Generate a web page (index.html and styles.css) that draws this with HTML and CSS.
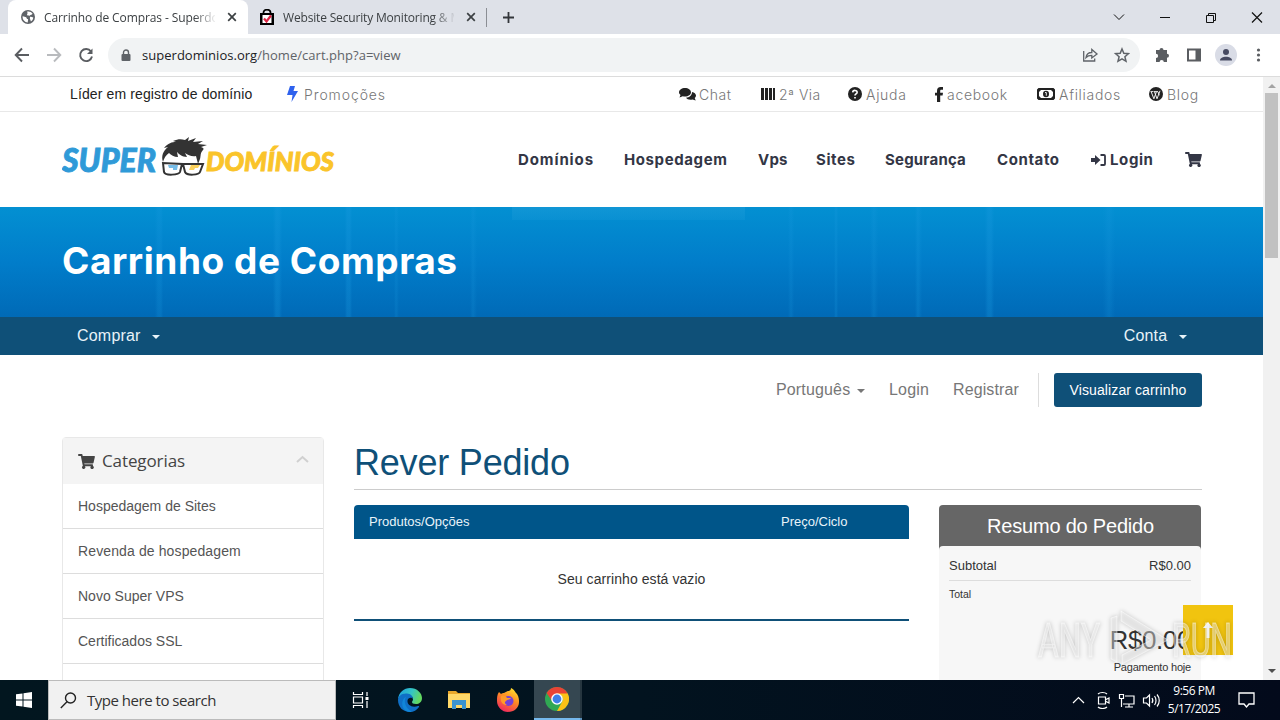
FILE: index.html
```
<!DOCTYPE html>
<html lang="pt">
<head>
    <meta charset="UTF-8">
    <meta name="viewport" content="width=device-width, initial-scale=1.0">
    <title>Carrinho de Compras - Superdominios</title>
    <link rel="stylesheet" href="styles.css">
</head>
<body>
    <svg width="0" height="0" class="defs">
        <symbol id="cart" viewBox="0 0 576 512"><path d="M528 301l47-208c4-15-8-29-23-29H159l-9-45C148 8 138 0 126 0H24C11 0 0 11 0 24v16c0 13 11 24 24 24h70l70 343a56 56 0 1 0 67 9h210a56 56 0 1 0 64-10l5-25c4-15-8-29-23-29H218l-6-32h293c11 0 21-8 23-19z"/></symbol>
        <symbol id="close" viewBox="0 0 10 10"><path d="M1.2 1.2l7.6 7.6M8.8 1.2L1.2 8.8" fill="none" stroke="currentColor" stroke-width="1.7"/></symbol>
    </svg>

    <!-- Tabs -->
    <div class="tabs">
        <div class="tab active">
            <svg width="14" height="14" viewBox="0 0 14 14"><circle cx="7" cy="7" r="7" fill="#5f6368"/><path d="M1.6 6.2c1.8.2 2.3 1 3.6 1 .8 1 .2 1.7 1.7 1.9.6 1-.2 1.6-.1 3.3C3.6 12.2 1.4 9.8 1.6 6.2zM6 1.7c2-.6 4.3.1 5.6 2-.9 1.5-2 .7-2.7 1.8-.9.9-1.4-.5-2.5-.1C5.2 4.7 7.5 3.7 6 1.7zM9 7c1.3-.6 2.2.5 3.3.4-.2 1.9-1.1 3.2-2.4 4C9.5 9.8 8.5 8.700 9 7z" fill="#fff"/></svg>
            <span class="tab-title">Carrinho de Compras - Superdomínios</span>
            <svg class="x" width="10" height="10"><use href="#close"/></svg>
        </div>
        <div class="tab second">
            <svg width="14" height="17" viewBox="0 0 14 17"><path d="M3.5 5V3.5a3.5 2.8 0 0 1 7 0V5" fill="none" stroke="#000" stroke-width="1.7"/><path d="M0 4h14v12H0z"/><path d="M2.500 6h9v8h-9z" fill="#fff"/><path d="M4 9.500l2.500 3L11 6.500" fill="none" stroke="#dc2545" stroke-width="2.200"/></svg>
            <span class="tab-title">Website Security Monitoring &amp; Malware</span>
            <svg class="x" width="10" height="10"><use href="#close"/></svg>
        </div>
        <svg class="plus" width="13" height="13" viewBox="0 0 13 13"><path d="M6.5 1v11M1 6.5h11" stroke="#33363a" stroke-width="1.8"/></svg>
        <svg class="window-buttons" width="150" height="14" viewBox="0 0 150 14" fill="none" stroke="#111">
            <path d="M1 4.5l5 5 5-5"/><path d="M47 7.5h10"/><path d="M93.5 5.5h7v7h-7zM95.5 5.500v-2h7v7h-2"/><path d="M139 2.5l10 10M149 2.5l-10 10" stroke-width="1.200"/>
        </svg>
    </div>

    <!-- Address bar -->
    <div class="toolbar">
        <svg class="nav-icons" width="80" height="16" viewBox="0 0 80 16" fill="none" stroke="#5a5d61" stroke-width="1.9">
            <path d="M15 8H2M8 1.5L1.7 8 8 14.5"/><path d="M33 8h13M40 1.5L46.3 8 40 14.5" stroke="#b9bbbe"/><path d="M77 4.5A6 6 0 1 0 78 9.5"/><path d="M78.5 1.5v5.5H73z" fill="#5a5d61" stroke="none"/>
        </svg>
        <div class="url">
            <svg width="10" height="13" viewBox="0 0 10 13"><path d="M2.5 6V3.5a2.5 2.5 0 0 1 5 0V6" fill="none" stroke="#5f6368" stroke-width="1.4"/><rect x=".5" y="5" width="9" height="7" rx="1" fill="#5f6368"/></svg>
            <span class="address"><b>superdominios.org</b>/home/cart.php?a=view</span>
            <svg class="share" width="48" height="16" viewBox="0 0 48 16" fill="none" stroke="#5f6368" stroke-width="1.3">
                <path d="M1.7 4v10h11v-2.5M4 10.5c.5-3.5 2.5-5 5.8-5V2.5L15 7l-5.2 4V8.3C7 8.3 5.5 8.8 4 10.5z"/><path d="M40 2l1.8 4.3 4.6.4-3.5 3 1.1 4.6L40 11.9l-4 2.4 1.1-4.6-3.5-3 4.6-.4z" stroke-width="1.5"/>
            </svg>
        </div>
        <svg class="ext" width="112" height="22" viewBox="0 0 112 22" fill="#5a5d61">
            <path d="M2 6h3.5a2 2 0 1 1 4 0H13v3.8a2 2 0 1 1 0 4V18H9.8a2 2 0 1 0-4.2 0H2v-4a2 2 0 1 0 0-4.200z"/>
            <path d="M33 4.5h14v13H33zM35 6.5v9h6.500v-9z" fill-rule="evenodd"/>
            <circle cx="72" cy="11" r="11" fill="#d9dce6"/><circle cx="72" cy="8" r="3" fill="#474b62"/><path d="M66 16.5c0-5 12-5 12 0z" fill="#474b62"/>
            <circle cx="104.500" cy="6" r="1.6"/><circle cx="104.500" cy="11" r="1.6"/><circle cx="104.500" cy="16" r="1.6"/>
        </svg>
    </div>

    <div class="viewport">
        <div class="page">
            <div class="topbar">
                <span class="slogan">Líder em registro de domínio</span>
                <svg class="bolt" width="11" height="16" viewBox="0 0 11 16"><path d="M3 0h5L6.5 5H11L4.5 16 5.5 9H0z" fill="#2f62ee"/></svg>
                <a class="promo">Promoções</a>
                <div class="top-links">
                    <a><svg width="17" height="14" viewBox="0 0 17 14"><path d="M6 1c3.3 0 6 1.9 6 4.3S9.3 9.6 6 9.6c-.8 0-1.5-.1-2.2-.3L.5 10.5l1-2.6C.5 7.2 0 6.3 0 5.3 0 2.9 2.7 1 6 1z"/><path d="M13 5c2.3.5 4 1.9 4 3.6 0 1-.5 1.8-1.3 2.5l1 2.3-3.2-1c-3 .7-5.5-.2-6.5-1.7C10.5 10.5 13 8.5 13 5z"/></svg><span>Chat</span></a>
                    <a><svg width="15" height="12" viewBox="0 0 15 12"><path d="M0 0h3v12H0zM4 0h3v12H4zM8 0h3v12H8zM12 0h2v12h-2z"/></svg><span>2ª Via</span></a>
                    <a><svg width="14" height="14" viewBox="0 0 14 14"><circle cx="7" cy="7" r="7"/><path d="M4.7 5.4C5 2.5 9.6 3 9.1 5.6 8.8 7 7 6.9 7 8.5M7 10v1.5" fill="none" stroke="#fff" stroke-width="1.6"/></svg><span>Ajuda</span></a>
                    <a><svg width="8" height="15" viewBox="0 0 8 15"><path d="M2 15V8.5H0V5.7h2V4c0-2.5 1.2-4 3.8-4H8v2.7H6.5c-1 0-1.3.4-1.3 1.3v1.7H8l-.4 2.8H5.2V15z"/></svg><span>acebook</span></a>
                    <a><svg width="18" height="12" viewBox="0 0 18 12"><path d="M1.500 0h15L18 1.500v9L16.500 12h-15L0 10.500v-9zM4 2L2 4v4l2 2h10l2-2V4l-2-2z" fill-rule="evenodd"/><ellipse cx="9" cy="6" rx="3" ry="3.300"/><path d="M8 4.500h1.300v3.200" fill="none" stroke="#fff" stroke-width=".9"/></svg><span>Afiliados</span></a>
                    <a><svg width="14" height="14" viewBox="0 0 14 14"><circle cx="7" cy="7" r="7"/><path d="M2.2 4.8l2.7 7M5.5 4.8l2.5 7M9 4.8l1.3 3.5M4.9 11.800L7.300 5M8 11.800l3-8M1.500 4.600h3M5 4.600h4" fill="none" stroke="#fff" stroke-width=".9"/></svg><span>Blog</span></a>
                </div>
            </div>

            <div class="header">
                <svg class="logo" width="276" height="44" viewBox="0 0 276 44">
                    <text class="logo-text" x="0" y="36" textLength="94" lengthAdjust="spacingAndGlyphs" font-size="32" fill="#2f9ad8" stroke="#2f9ad8">SUPER</text>
                    <text class="logo-text" x="144" y="35" textLength="128" lengthAdjust="spacingAndGlyphs" font-size="27" fill="#fac42a" stroke="#fac42a">DOMÍNIOS</text>
                    <path d="M101 26c-2-6 0-11 5-15l-4 1c4-5 8-6 12-6l-3-1c5-2 8-2 12-1l4-3-1 4 8-3-3 4 10-1-5 3 9 1-6 2c3 1 3 2 2 3-3 3-2 6-3 9l-2 5-2-8c-4 1-8-1-11-3l2 4c-5 0-8-3-10-5l1 5c-4 0-7-2-9-4-3 2-5 5-6 9z" fill="#333"/>
                    <path d="M101 27l1 9c1 4 15 3 16 0l2-8zm20 1l2 8c2 4 14 3 15 0l3-8z" fill="#fff" stroke="#333" stroke-width="2"/>
                    <path d="M106 29h10l-1 5h-4v-2h-4z" fill="#77bde8"/><path d="M129 29h9l-2 3h-3l-1 2h-5z" fill="#fbd15b"/>
                </svg>
                <div class="menu">
                    <a>Domínios</a><a>Hospedagem</a><a>Vps</a><a>Sites</a><a>Segurança</a><a>Contato</a>
                    <a class="enter"><svg width="15" height="12" viewBox="0 0 15 12"><path d="M0 4h4V1l5.500 5L4 11V8H0z"/><path d="M9.500 1H13a1 1 0 0 1 1 1v8a1 1 0 0 1-1 1H9.500" fill="none" stroke="#333645" stroke-width="1.800"/></svg>Login</a>
                    <a><svg width="17" height="15"><use href="#cart"/></svg></a>
                </div>
            </div>

            <div class="banner"><h1>Carrinho de Compras</h1></div>

            <div class="subnav">
                <span>Comprar <i class="caret"></i></span>
                <span>Conta <i class="caret"></i></span>
            </div>

            <div class="user-row">
                <span class="lang">Português <i class="caret"></i></span>
                <span class="login">Login</span>
                <span class="register">Registrar</span>
                <a class="button">Visualizar carrinho</a>
            </div>

            <div class="content">
                <div class="sidebar">
                    <div class="side-title">
                        <svg width="17" height="15"><use href="#cart"/></svg>
                        <span>Categorias</span>
                        <svg class="chevron" width="13" height="8" viewBox="0 0 13 8"><path d="M1 7l5.500-5L12 7" fill="none" stroke="#d0d0d0" stroke-width="2"/></svg>
                    </div>
                    <a>Hospedagem de Sites</a>
                    <a>Revenda de hospedagem</a>
                    <a>Novo Super VPS</a>
                    <a>Certificados SSL</a>
                    <a></a>
                </div>
                <div class="main">
                    <h2>Rever Pedido</h2>
                    <div class="columns">
                        <div class="cart">
                            <div class="cart-head"><span>Produtos/Opções</span><span>Preço/Ciclo</span></div>
                            <div class="cart-empty">Seu carrinho está vazio</div>
                        </div>
                        <div class="summary">
                            <h3>Resumo do Pedido</h3>
                            <div class="summary-body">
                                <div class="subtotal"><span>Subtotal</span><span>R$0.00</span></div>
                                <div class="total">Total</div>
                                <div class="amount">R$0.00</div>
                                <div class="today">Pagamento hoje</div>
                            </div>
                        </div>
                    </div>
                </div>
            </div>
        </div>
        <div class="scrollbar">
            <i class="up"></i>
            <div class="thumb"></div>
            <i class="down"></i>
        </div>
    </div>

    <!-- Back to top button -->
    <div class="to-top"><svg width="10" height="16" viewBox="0 0 10 16"><path d="M5 0l5 6H6.500v10h-3V6H0z" fill="#fff"/></svg></div>

    <svg class="watermark" width="204" height="64" viewBox="0 0 204 64">
        <text x="4" y="51" textLength="62" lengthAdjust="spacingAndGlyphs">ANY</text>
        <path class="mark" d="M77 12l6-2v46l-6-3zM87 5l47 29-46 24v-9l29-15-30-19z"/>
        <text x="138" y="51" textLength="60" lengthAdjust="spacingAndGlyphs">RUN</text>
    </svg>

    <!-- Taskbar -->
    <div class="taskbar">
        <div class="start"><svg width="16" height="16" viewBox="0 0 16 16"><path d="M0 2.300l6.500-.9v6.100H0zM7.500 1.200L16 0v7.500H7.500zM0 8.500h6.500v6.100L0 13.700zM7.500 8.500H16V16l-8.500-1.200z" fill="#fff"/></svg></div>
        <div class="search">
            <svg width="17" height="17" viewBox="0 0 17 17" fill="none" stroke="#222" stroke-width="1.400"><circle cx="10.500" cy="6" r="5"/><path d="M7 9.800L.8 16"/></svg>
            <span>Type here to search</span>
        </div>
        <div class="apps">
            <div><svg width="18" height="16" viewBox="0 0 18 16" fill="none" stroke="#fff" stroke-width="1.200"><path d="M1.500 0v2.500h9V0M1.500 16v-2.500h9V16M1.500 5h9v6h-9zM15 0v4M15 9v7"/><path d="M13.500 5h3v3h-3z" fill="#fff" stroke="none"/></svg></div>
            <div><svg width="24" height="24" viewBox="0 0 24 24">
                <defs><linearGradient id="edge" x1="0" y1="0" x2="1" y2=".3"><stop offset="0" stop-color="#1b9de2"/><stop offset=".6" stop-color="#35c5c4"/><stop offset="1" stop-color="#62d861"/></linearGradient></defs>
                <path d="M0 11C1 4 6 0 12 0c7 0 12 5 12 10 0 4-3 6-6 6s-4-1-4-2 1-1 1-3-2-4-5-4C5 7 1 9 0 11z" fill="url(#edge)"/>
                <path d="M0 12c0-4 4-7 9-6.500 3.500.3 6 2.500 6 5.500-1-2-5-2-5.500 1.500C9 17 14 20 20 18c.8-.2 1.500.2 1 1-2 3-5.500 5-9 5C5 24 0 19 0 12z" fill="#0f6fc6"/>
                <path d="M8 9c-3 5 0 12 6 14.800C7 25 3 19 4.500 13.500 5.200 11 6.500 9.500 8 9z" fill="#1186d8"/></svg></div>
            <div><svg width="22" height="18" viewBox="0 0 22 18"><path d="M0 0h8l2 2h12v15H0z" fill="#e9a82b"/><path d="M0 3h22v14H0z" fill="#ffd868"/><path d="M4 9h14v9h-4v-4H8v4H4z" fill="#3c94d0"/></svg></div>
            <div><svg width="24" height="24" viewBox="0 0 24 24">
                <defs><linearGradient id="fox" x1=".8" y1="0" x2=".3" y2="1"><stop offset="0" stop-color="#ffe52e"/><stop offset=".45" stop-color="#ff8b24"/><stop offset="1" stop-color="#f0265f"/></linearGradient></defs>
                <path d="M3 4l2 2c1-1 2-1 3-1 2-1 3-2 4-2 2 0 3-1 3-3 4 2 4 4 5 5l1 1c2 3 2 6 2 8 0 6-5 10-11 10S1 19 1 13c0-4 0-6 2-9z" fill="url(#fox)"/><circle cx="12.500" cy="13" r="5" fill="#7540d6"/><path d="M5 8c3-1 5 0 6 2h4c-1 2-4 1-5 3-2 1-1 3 1 4-5 0-7-4-6-9z" fill="#ff9b28"/></svg></div>
            <div class="running"><svg width="24" height="24" viewBox="0 0 24 24"><circle cx="12" cy="12" r="12" fill="#30a853"/><path d="M1.600 6A12 12 0 0 1 22.400 6L22.400 7H12L7 14z" fill="#e94335"/><path d="M22.400 6A12 12 0 0 1 12 24l5-9c2-4 0-7-5-8.500h10.400z" fill="#fbc116"/><circle cx="12" cy="12" r="5.800" fill="#fff"/><circle cx="12" cy="12" r="4.400" fill="#3f7fe8"/></svg></div>
            <div class="running-edge"></div>
        </div>
        <div class="tray">
            <svg width="90" height="18" viewBox="0 0 90 18" fill="none" stroke="#fff" stroke-width="1.200">
                <path d="M1 12l5.500-5.500L12 12"/>
                <path d="M26.500 6h7v7h-7zM34 8.500l3-1.500v5l-3-1.500M26 3c2-2 7-2 9 0M26 16c2 2 7 2 9 0"/>
                <path d="M53 5h9v8H51M57 13v3M53 16h8M47.500 3.500h4v4h-4zM49.500 7.500V16"/>
                <path d="M71.500 7h3l3-3v11l-3-3h-3zM80 7c1 1.500 1 3.500 0 5M82.500 5c2 2.500 2 6.500 0 9M85 3.500c3 3.500 3 8.500 0 12"/>
            </svg>
            <div class="clock"><div>9:56 PM</div><div>5/17/2025</div></div>
            <svg class="note" width="17" height="17" viewBox="0 0 17 17" fill="none" stroke="#fff" stroke-width="1.300"><path d="M1 1h15v11h-5l-2.500 3L6 12H1z"/></svg>
        </div>
    </div>
</body>
</html>
```

FILE: styles.css
```
* {
    box-sizing: border-box;
}
body {
    margin: 0;
    width: 1280px;
    height: 720px;
    overflow: hidden;
    position: relative;
    font-family: "Liberation Sans", Arial, sans-serif;
    background: #fff;
    color: #333;
}
svg {
    display: block;
    flex-shrink: 0;
}
.defs {
    position: absolute;
}
h1, h2, h3 {
    margin: 0;
}
span, a, h1, h2, h3 {
    white-space: nowrap;
}

/* browser */
.tabs {
    display: flex;
    align-items: center;
    height: 34px;
    background: #dee1e8;
    font: 12px "Open Sans", sans-serif;
    color: #3c4043;
}
.tab {
    display: flex;
    align-items: center;
    height: 34px;
}
.tab.active {
    width: 240px;
    margin-left: 8px;
    padding-left: 13px;
    background: #fff;
    border-radius: 8px 8px 0 0;
}
.tab.second {
    width: 239px;
    padding-left: 12px;
}
.tab-title {
    width: 171px;
    margin: 0 12px 0 9px;
    overflow: hidden;
    letter-spacing: -0.1px;
    -webkit-mask-image: linear-gradient(90deg, #000 150px, transparent 173px);
    mask-image: linear-gradient(90deg, #000 150px, transparent 173px);
}
.second .tab-title {
    letter-spacing: -0.17px;
}
.x {
    color: #3c4043;
}
.plus {
    box-sizing: content-box;
    margin-left: -1px;
    padding: 3px 0 3px 15px;
    border-left: 1px solid #8b8e94;
}
.window-buttons {
    margin-left: auto;
    margin-right: 17px;
}
.toolbar {
    display: flex;
    align-items: center;
    height: 43px;
    border-bottom: 1px solid #dcdcdc;
}
.nav-icons {
    margin-left: 14px;
}
.url {
    display: flex;
    align-items: center;
    width: 1032px;
    height: 34px;
    margin-left: 14px;
    padding: 0 10px 0 13px;
    border-radius: 17px;
    background: #f1f3f4;
}
.address {
    margin-left: 11px;
    font: 13px "Open Sans", sans-serif;
    letter-spacing: 0.03px;
    color: #5f6368;
}
.address b {
    font-weight: normal;
    color: #202124;
}
.share {
    margin-left: auto;
}
.ext {
    margin-left: 14px;
}

/* page */
.viewport {
    display: flex;
    height: 603px;
}
.page {
    width: 1263px;
    overflow: hidden;
}
.topbar {
    display: flex;
    align-items: center;
    height: 35px;
    padding-left: 70px;
    border-bottom: 1px solid #e8e8e8;
    font-size: 14px;
}
.slogan {
    width: 217px;
    color: #222;
    letter-spacing: 0.12px;
}
.promo {
    width: 370px;
    margin-left: 6px;
    letter-spacing: 0.9px;
}
.promo, .top-links {
    font: 300 14px Inter, sans-serif;
    color: #777;
}
.top-links {
    display: grid;
    grid-template-columns: 82px 87px 87px 102px 112px 54px;
    margin-left: 5px;
    letter-spacing: 0.7px;
}
.top-links a {
    display: flex;
    align-items: center;
    gap: 4px;
}
.top-links a:nth-child(-n+2) {
    gap: 3px;
    letter-spacing: 0.5px;
}
.top-links svg {
    fill: #222;
}
.header {
    display: flex;
    align-items: center;
    height: 95px;
    padding-left: 62px;
}
.logo {
    margin-top: -4px;
}
.logo-text {
    font-family: Lato, sans-serif;
    font-weight: 900;
    font-style: italic;
    stroke-width: 0.9px;
}
.menu {
    display: grid;
    grid-template-columns: 106px 134px 58px 69px 112px 94px 94px 17px;
    align-items: center;
    margin-left: 180px;
    font: 700 15px Inter, sans-serif;
    letter-spacing: 0.6px;
    color: #333645;
    fill: #333645;
}
.menu a:nth-child(3), .menu a:nth-child(5) {
    letter-spacing: 0.2px;
}
.menu a:nth-child(1) {
    letter-spacing: 0.9px;
}
.enter {
    display: flex;
    align-items: center;
    gap: 4px;
}
.banner {
    display: flex;
    align-items: center;
    height: 110px;
    padding-left: 62px;
    background:
        linear-gradient(#1c9bd888, #1c9bd844) 512px 0 / 233px 13px no-repeat,
        linear-gradient(90deg, transparent 155px, #1c9be033 158px 161px, transparent 163px 273px, #1c9be044 276px 279px, transparent 282px 345px, #1c9be044 347px 350px, transparent 352px 394px, #1c9be033 396px, transparent 399px 470px, #1c9be033 473px, transparent 477px 788px, #1c9be033 791px, transparent 794px 834px, #1c9be044 836px, transparent 838px 870px, #1c9be033 874px, transparent 878px 915px, #1c9be044 918px, transparent 922px 985px, #1c9be044 988px 991px, transparent 994px 1103px, #1c9be033 1109px, transparent 1115px),
        linear-gradient(#0390d2, #017dca 50%, #006ab7);
}
.banner h1 {
    margin-top: -3px;
    font: 700 37px Inter, sans-serif;
    letter-spacing: 0.55px;
    color: #fff;
}
.subnav {
    display: flex;
    justify-content: space-between;
    align-items: center;
    height: 38px;
    padding: 0 76px 0 77px;
    background: #0f5078;
    color: #e8f3f9;
    font-size: 16px;
    letter-spacing: 0.2px;
}
.caret {
    display: inline-block;
    margin-left: 7px;
    vertical-align: 2px;
    border: 4px solid transparent;
    border-top-color: currentColor;
    border-bottom: 0;
}
.user-row {
    display: flex;
    justify-content: flex-end;
    align-items: center;
    height: 34px;
    margin: 18px 61px 0 0;
    font-size: 16px;
    color: #777;
}
.lang {
    width: 113px;
    letter-spacing: 0.15px;
}
.lang .caret {
    margin-left: 2px;
}
.login {
    width: 64px;
    letter-spacing: 0.2px;
}
.register {
    width: 86px;
    line-height: 34px;
    letter-spacing: 0.1px;
    border-right: 1px solid #ddd;
}
.button {
    width: 148px;
    margin-left: 15px;
    border-radius: 3px;
    background: #0f5078;
    color: #fff;
    font-size: 14px;
    letter-spacing: 0.1px;
    line-height: 34px;
    text-align: center;
}
.content {
    display: flex;
    gap: 30px;
    margin: 30px 61px 0 62px;
}
.sidebar {
    width: 262px;
    border: 1px solid #e8e8e8;
    border-radius: 4px 4px 0 0;
}
.side-title {
    display: flex;
    align-items: center;
    height: 46px;
    padding: 0 14px 0 15px;
    background: #f4f4f4;
    font: 17px "Open Sans", sans-serif;
    letter-spacing: -0.1px;
    color: #444;
    fill: #444;
}
.side-title span {
    margin: -2px 0 0 7px;
}
.chevron {
    margin: -5px 0 0 auto;
}
.sidebar a {
    display: block;
    height: 45px;
    padding-left: 15px;
    border-bottom: 1px solid #ddd;
    font-size: 14px;
    line-height: 44px;
    color: #555;
}
.sidebar a:nth-child(3) {
    letter-spacing: 0.12px;
}
.main {
    width: 848px;
}
.main h2 {
    height: 53px;
    border-bottom: 1px solid #ccc;
    font-size: 36px;
    font-weight: normal;
    letter-spacing: -0.2px;
    line-height: 52px;
    color: #0f5078;
}
.columns {
    display: flex;
    gap: 30px;
    margin-top: 15px;
}
.cart {
    width: 555px;
}
.cart-head {
    display: grid;
    grid-template-columns: 412px 1fr;
    padding-left: 15px;
    border-radius: 4px 4px 0 0;
    background: #005589;
    color: #e8f3f9;
    font-size: 13px;
    line-height: 34px;
}
.cart-empty {
    height: 82px;
    border-bottom: 2px solid #0f5078;
    font-size: 14px;
    letter-spacing: 0.07px;
    line-height: 81px;
    text-align: center;
}
.summary {
    width: 262px;
    height: 220px;
    border-radius: 4px 4px 0 0;
    background: #666;
}
.summary h3 {
    height: 41px;
    padding-left: 1px;
    color: #fff;
    font-size: 20px;
    font-weight: normal;
    letter-spacing: -0.2px;
    line-height: 42px;
    text-align: center;
}
.summary-body {
    height: 179px;
    padding: 1px 10px;
    border-radius: 4px 4px 0 0;
    background: #f7f7f7;
}
.subtotal {
    display: flex;
    justify-content: space-between;
    height: 34px;
    border-bottom: 1px solid #ddd;
    font-size: 13px;
    line-height: 38px;
}
.total {
    font-size: 10.5px;
    line-height: 27px;
}
.amount {
    margin-top: 12px;
    font-size: 26px;
    letter-spacing: -0.4px;
    line-height: 40px;
    text-align: right;
}
.today {
    font-size: 11px;
    letter-spacing: -0.2px;
    line-height: 14px;
    text-align: right;
}
.scrollbar {
    display: flex;
    flex-direction: column;
    align-items: center;
    width: 17px;
    background: #f1f1f1;
}
.up, .down {
    border: 4px solid transparent;
}
.up {
    margin-top: 3px;
    border-bottom-color: #a3a3a3;
}
.down {
    margin: auto 0 3px;
    border-top-color: #505050;
}
.thumb {
    width: 13px;
    height: 165px;
    margin-top: 5px;
    background: #c1c1c1;
}

/* floats over the order summary */
.to-top {
    position: absolute;
    left: 1183px;
    top: 605px;
    display: flex;
    align-items: center;
    justify-content: center;
    width: 50px;
    height: 50px;
    background: #f1c40f;
}
.watermark {
    position: absolute;
    left: 1034px;
    top: 606px;
    filter: drop-shadow(0 0 2px #0006);
}
.watermark text, .mark {
    font: 48px Roboto, sans-serif;
    fill: #ffffff66;
    stroke: #ffffff77;
    stroke-width: 1px;
}

/* taskbar */
.taskbar {
    display: flex;
    height: 40px;
    background: linear-gradient(90deg, #02161f, #02131f 50%, #030a1b);
    color: #fff;
}
.start {
    display: flex;
    align-items: center;
    justify-content: center;
    width: 48px;
}
.search {
    display: flex;
    align-items: center;
    width: 288px;
    padding-left: 11px;
    border: 1px solid #bbb;
    background: #f1f1f1;
    color: #333;
    font: 15px "Open Sans", sans-serif;
}
.search span {
    margin-left: 10px;
    letter-spacing: -0.48px;
}
.apps {
    display: flex;
}
.apps div {
    display: flex;
    align-items: center;
    justify-content: center;
    width: 49px;
}
.apps .running {
    width: 46px;
    margin-left: 2px;
    background: #354751;
    border-bottom: 2px solid #76b9ed;
}
.apps .running-edge {
    width: 2px;
    background: #26363f;
    border-bottom: 2px solid #5b91bb;
}
.tray {
    display: flex;
    align-items: center;
    margin-left: auto;
}
.clock {
    width: 62px;
    margin-left: 1px;
    font: 12px "Open Sans", sans-serif;
    letter-spacing: -0.5px;
    line-height: 18px;
    text-align: center;
}
.note {
    margin: 0 25px 0 13px;
}
```
